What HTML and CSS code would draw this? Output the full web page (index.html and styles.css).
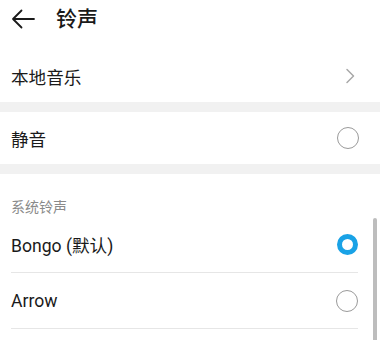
FILE: index.html
```html
<!DOCTYPE html>
<html>
<head>
<meta charset="utf-8">
<link rel="stylesheet" href="styles.css">
</head>
<body>
<div class="page">
  <header class="header">
    <svg class="back" width="24" height="20" viewBox="0 0 24 20">
      <path d="M23 10H2M10.5 1.5L2 10l8.5 8.5" fill="none" stroke="#1a1a1a" stroke-width="1.8" stroke-linecap="round" stroke-linejoin="round"/>
    </svg>
    <h1 class="title">铃声</h1>
  </header>
  <div class="row row-first">
    <span class="label">本地音乐</span>
    <svg class="chev" width="10" height="16" viewBox="0 0 10 16">
      <path d="M2 1.5L8.5 8 2 14.5" fill="none" stroke="#a8a8a8" stroke-width="1.5" stroke-linecap="round" stroke-linejoin="round"/>
    </svg>
  </div>
  <div class="band"></div>
  <div class="row">
    <span class="label">静音</span>
    <span class="radio"></span>
  </div>
  <div class="band"></div>
  <div class="section">
    <div class="section-title">系统铃声</div>
    <div class="item">
      <span class="label">Bongo (默认)</span>
      <span class="radio on"></span>
    </div>
    <div class="item">
      <span class="label">Arrow</span>
      <span class="radio"></span>
    </div>
    <div class="scrollbar"></div>
  </div>
</div>
</body>
</html>
```

FILE: styles.css
```css
html, body {
  margin: 0;
  padding: 0;
  background: #ffffff;
}
body {
  font-family: Roboto, "Noto Sans CJK SC", sans-serif;
  color: #1a1a1a;
  width: 380px;
  height: 340px;
  overflow: hidden;
}
.page {
  display: flex;
  flex-direction: column;
}
.header {
  height: 38px;
  display: flex;
  align-items: center;
  padding-left: 11px;
}
.back {
  display: block;
}
.title {
  margin: 0 0 0 21px;
  font-size: 21px;
  font-weight: 500;
  line-height: 38px;
}
.row {
  height: 52px;
  display: flex;
  align-items: center;
  justify-content: space-between;
  padding: 0 21px 0 11px;
}
.row-first {
  margin-top: 12px;
}
.row-first .chev {
  margin-right: 4px;
}
.label {
  font-size: 17.6px;
}
.band {
  height: 10px;
  background: #f1f1f1;
}
.radio {
  width: 20px;
  height: 20px;
  border: 1.3px solid #9a9a9a;
  border-radius: 50%;
  box-sizing: content-box;
}
.radio.on {
  width: 11px;
  height: 11px;
  border: 5.6px solid #19a2e6;
}
.section {
  position: relative;
}
.section-title {
  font-size: 14px;
  color: #8a8a8a;
  padding: 23px 0 0 11px;
  height: 20px;
  line-height: 20px;
}
.item {
  height: 55px;
  margin: 0 22px 0 11px;
  display: flex;
  align-items: center;
  justify-content: space-between;
  border-bottom: 1px solid #e6e6e6;
}
.scrollbar {
  position: absolute;
  right: 3px;
  top: 44px;
  width: 4px;
  height: 123px;
  border-radius: 2px 2px 0 0;
  background: #bdbdbd;
}
```
